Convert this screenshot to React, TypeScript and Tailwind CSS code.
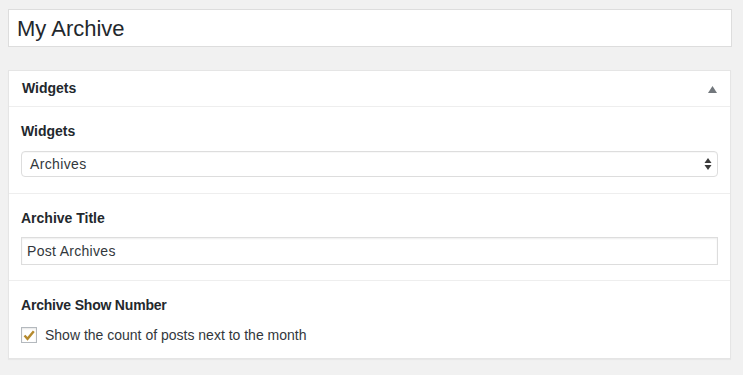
import React from "react";

export default function App() {
  const font = { fontFamily: '"Liberation Sans", Arial, sans-serif' };
  return (
    <div className="w-[743px] h-[375px] bg-[#f1f1f1] pt-[9px] pl-[8px]" style={font}>
      <div className="w-[724px] h-[38px] bg-white border border-[#dddddd] flex items-center pl-[8px] text-[22px] text-[#23282d]">
        My Archive
      </div>
      <div className="mt-[23px] w-[723px] bg-white border border-[#e5e5e5] shadow-[0_1px_1px_rgba(0,0,0,0.04)]">
        <div className="h-[36px] border-b border-[#eeeeee] flex items-center justify-between pl-[13px] pr-[13px]">
          <span className="text-[14px] font-bold text-[#23282d]">Widgets</span>
          <svg width="9" height="7" viewBox="0 0 9 7" className="mt-[1px]">
            <polygon points="4.5,0 9,7 0,7" fill="#72777c" />
          </svg>
        </div>
        <div className="px-[12px] pt-[15px] pb-[16px] border-b border-[#eeeeee]">
          <div className="h-[18px] leading-[18px] text-[14px] font-bold text-[#23282d]">Widgets</div>
          <div className="mt-[11px] h-[26px] rounded-[4px] border border-[#dddddd] flex items-center justify-between pl-[8px] pr-[5px] text-[14px] tracking-[0.35px] text-[#32373c] shadow-[inset_0_1px_1px_rgba(0,0,0,0.03)]">
            <span>Archives</span>
            <svg width="8" height="14" viewBox="0 0 8 14">
              <polygon points="4,1 7.5,6 0.5,6" fill="#3a3a3a" />
              <polygon points="0.5,8 7.5,8 4,13" fill="#3a3a3a" />
            </svg>
          </div>
        </div>
        <div className="px-[12px] pt-[15px] pb-[15px] border-b border-[#eeeeee]">
          <div className="h-[18px] leading-[18px] text-[14px] font-bold text-[#23282d]">Archive Title</div>
          <div className="mt-[10px] h-[28px] border border-[#dddddd] flex items-center pl-[5px] text-[14px] tracking-[0.3px] text-[#32373c] shadow-[inset_0_1px_2px_rgba(0,0,0,0.07)]">
            Post Archives
          </div>
        </div>
        <div className="px-[12px] pt-[15px] pb-[15px]">
          <div className="h-[18px] leading-[18px] text-[14px] font-bold tracking-[-0.2px] text-[#23282d]">Archive Show Number</div>
          <div className="mt-[13px] h-[16px] flex items-center">
            <div className="w-[16px] h-[16px] border border-[#b4b9be] bg-white flex items-center justify-center shadow-[inset_0_1px_2px_rgba(0,0,0,0.1)]">
              <svg width="12" height="11" viewBox="0 0 12 11">
                <path d="M1.5 5.5 L4.5 8.8 L10.8 1.2" fill="none" stroke="#b58a2e" strokeWidth="2.4" strokeLinejoin="miter" />
              </svg>
            </div>
            <span className="ml-[8px] leading-[16px] text-[14px] text-[#32373c]">Show the count of posts next to the month</span>
          </div>
        </div>
      </div>
    </div>
  );
}
